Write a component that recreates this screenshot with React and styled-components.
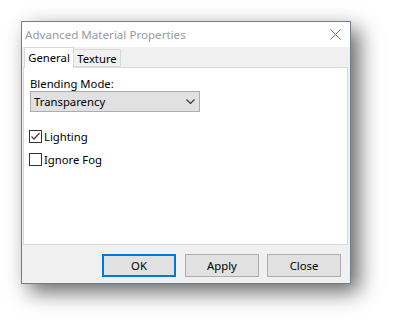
import React from 'react'
import styled, { createGlobalStyle } from 'styled-components'

const GlobalStyle = createGlobalStyle`
    html, body {
        margin: 0;
        padding: 0;
        background: #ffffff;
    }
    body {
        font-family: 'Noto Sans', 'Liberation Sans', sans-serif;
        font-size: 11.3px;
        color: #000000;
    }
`

const Page = styled.div`
    padding: 21px 0 0 21px;
    height: 326px;
    box-sizing: border-box;
`

const Window = styled.div`
    box-sizing: border-box;
    width: 330px;
    height: 263px;
    border: 1px solid #6f7e8e;
    background-color: #f0f0f0;
    box-shadow: 8px 8px 20px rgba(0, 0, 0, 0.6);
    display: flex;
    flex-direction: column;
`

const TitleBar = styled.div`
    height: 25px;
    background-color: #ffffff;
    display: flex;
    align-items: center;
    justify-content: space-between;
    padding: 0 9px 0 3px;
`

const Title = styled.span`
    color: #9a9a9a;
    font-size: 11.6px;
    line-height: 16px;
`

const TabStrip = styled.div`
    height: 20px;
    display: flex;
    align-items: flex-end;
    padding-left: 2px;
`

const Tab = styled.div`
    box-sizing: border-box;
    width: ${(props) => props.width}px;
    height: ${(props) => (props.active ? '21px' : '18px')};
    margin-bottom: ${(props) => (props.active ? '-1px' : '0')};
    margin-left: ${(props) => (props.active ? '0' : '-1px')};
    background-color: ${(props) => (props.active ? '#ffffff' : '#f0f0f0')};
    border: 1px solid #d9d9d9;
    border-bottom: ${(props) => (props.active ? 'none' : '1px solid #d9d9d9')};
    display: flex;
    align-items: center;
    justify-content: center;
    padding-bottom: ${(props) => (props.active ? '2px' : '0')};
    line-height: 15px;
    position: relative;
    z-index: ${(props) => (props.active ? 1 : 0)};
`

const Panel = styled.div`
    box-sizing: border-box;
    height: 178px;
    margin: 0 2px 0 1px;
    border: 1px solid #d9d9d9;
    background-color: #ffffff;
    padding: 8px 6px 0 6px;
`

const FieldLabel = styled.div`
    line-height: 15px;
`

const Select = styled.div`
    box-sizing: border-box;
    width: 170px;
    height: 21px;
    background-color: #e1e1e1;
    border: 1px solid #adadad;
    display: flex;
    align-items: center;
    justify-content: space-between;
    padding: 0 4px 0 3px;
    line-height: 15px;
`

const CheckRow = styled.label`
    display: flex;
    align-items: center;
    height: 15px;
    margin-top: ${(props) => props.gap}px;
    line-height: 15px;
`

const Box = styled.span`
    box-sizing: border-box;
    width: 13px;
    height: 13px;
    border: 1px solid #333333;
    background-color: #ffffff;
    margin: 0 2px 0 -1px;
    display: flex;
    align-items: center;
    justify-content: center;
`

const ButtonRow = styled.div`
    display: flex;
    justify-content: flex-end;
    padding: 9px 9px 0 0;
`

const Button = styled.button`
    box-sizing: border-box;
    width: 74px;
    height: 23px;
    margin-left: ${(props) => props.gap}px;
    background-color: #e1e1e1;
    border: ${(props) => (props.primary ? '2px solid #0078d7' : '1px solid #adadad')};
    font-family: inherit;
    font-size: 11.3px;
    color: #000000;
    padding: 0;
    line-height: 15px;
`

function CloseIcon() {
    return (
        <svg width="11" height="11" viewBox="0 0 11 11">
            <path d="M0.5 0.5 L10.5 10.5 M10.5 0.5 L0.5 10.5" stroke="#7a7a7a" strokeWidth="1" fill="none" />
        </svg>
    )
}

function Chevron() {
    return (
        <svg width="9" height="5" viewBox="0 0 9 5">
            <path d="M0.5 0.5 L4.5 4.5 L8.5 0.5" stroke="#3c3c3c" strokeWidth="1.2" fill="none" />
        </svg>
    )
}

function Check() {
    return (
        <svg width="11" height="11" viewBox="0 0 11 11">
            <path d="M1.5 5.5 L4 8 L9.5 2" stroke="#444444" strokeWidth="1.3" fill="none" />
        </svg>
    )
}

export default function App() {
    return (
        <Page>
            <GlobalStyle />
            <Window>
                <TitleBar>
                    <Title>Advanced Material Properties</Title>
                    <CloseIcon />
                </TitleBar>
                <TabStrip>
                    <Tab active width={50}>General</Tab>
                    <Tab width={48}>Texture</Tab>
                </TabStrip>
                <Panel>
                    <FieldLabel>Blending Mode:</FieldLabel>
                    <Select>
                        <span>Transparency</span>
                        <Chevron />
                    </Select>
                    <CheckRow gap={17}>
                        <Box>
                            <Check />
                        </Box>
                        Lighting
                    </CheckRow>
                    <CheckRow gap={8}>
                        <Box />
                        Ignore Fog
                    </CheckRow>
                </Panel>
                <ButtonRow>
                    <Button primary gap={0}>OK</Button>
                    <Button gap={9}>Apply</Button>
                    <Button gap={8}>Close</Button>
                </ButtonRow>
            </Window>
        </Page>
    )
}
